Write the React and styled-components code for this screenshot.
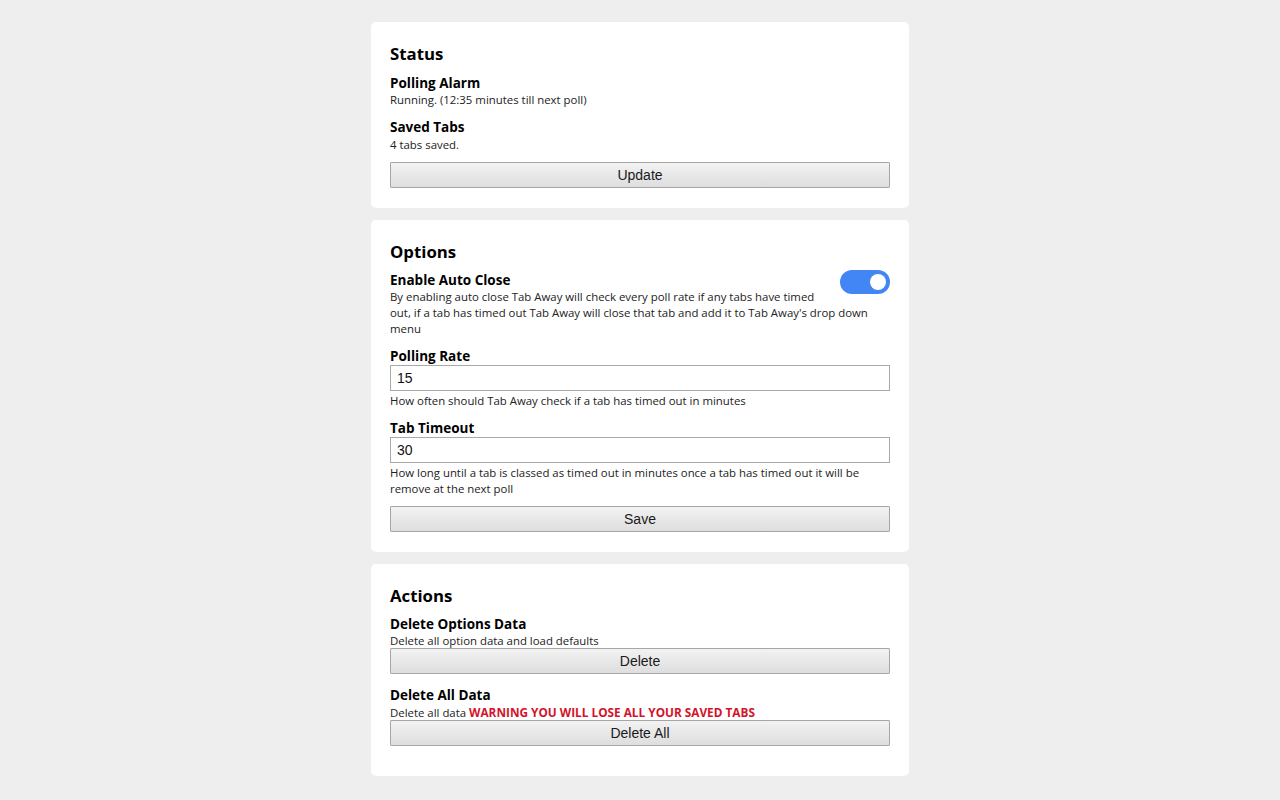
import React from 'react'
import styled, { createGlobalStyle } from 'styled-components'

const Global = createGlobalStyle`
  html, body {
    margin: 0;
    padding: 0;
    background: #eeeeee;
  }
  body {
    font-family: "Open Sans", "Noto Sans", sans-serif;
    color: #000;
  }
`

const Page = styled.div`
  display: flex;
  flex-direction: column;
  align-items: center;
  gap: 12px;
  padding: 22px 0 24px;
`

const Card = styled.section`
  width: 500px;
  background: #fff;
  border-radius: 5px;
  padding: 21px 19px ${p => p.$bottom || 20}px;
`

const Heading = styled.h2`
  margin: 0;
  font-size: 16.8px;
  line-height: 22px;
  font-weight: 700;
`

const Label = styled.div`
  font-size: 13.5px;
  line-height: 18px;
  font-weight: 700;
  margin-top: ${p => p.$gap ?? 10}px;
`

const Desc = styled.div`
  font-size: 11.4px;
  line-height: 16px;
  color: #222;
  margin-top: ${p => p.$before ?? 0}px;
`

const Warning = styled.span`
  color: #d4122a;
  font-weight: 700;
  font-size: 11.8px;
`

const Button = styled.button`
  display: block;
  width: 100%;
  height: 26px;
  margin-top: ${p => p.$gap ?? 9}px;
  border: 1px solid #a6a6a6;
  border-radius: 1px;
  background: linear-gradient(#f2f2f2, #dedede);
  font-family: "Liberation Sans", Arial, sans-serif;
  font-size: 14px;
  color: #1a1a1a;
  padding: 0;
`

const Input = styled.input`
  display: block;
  box-sizing: border-box;
  width: 100%;
  height: 26px;
  margin: 0;
  border: 1px solid #a9a9a9;
  padding: 0 6px;
  font-family: "Liberation Sans", Arial, sans-serif;
  font-size: 14px;
  color: #111;
  outline: none;
`

const ToggleBlock = styled.div`
  margin-top: 7px;
  padding-top: 1px;
  &::after {
    content: "";
    display: block;
    clear: both;
  }
`

const Switch = styled.div`
  float: right;
  margin: -1px 0 0 20px;
  width: 50px;
  height: 24px;
  border-radius: 12px;
  background: #4285f4;
  display: flex;
  align-items: center;
  justify-content: flex-end;
  padding-right: 4px;
  box-sizing: border-box;
`

const Knob = styled.div`
  width: 16px;
  height: 16px;
  border-radius: 50%;
  background: #fff;
`

export default function App() {
  return (
    <>
      <Global />
      <Page>
        <Card>
          <Heading>Status</Heading>
          <Label $gap={9}>Polling Alarm</Label>
          <Desc>Running. (12:35 minutes till next poll)</Desc>
          <Label>Saved Tabs</Label>
          <Desc $before={1}>4 tabs saved.</Desc>
          <Button>Update</Button>
        </Card>

        <Card>
          <Heading>Options</Heading>
          <ToggleBlock>
            <Switch><Knob /></Switch>
            <Label $gap={0}>Enable Auto Close</Label>
            <Desc>
              By enabling auto close Tab Away will check every poll rate if any tabs have timed out, if a tab has timed out Tab Away will close that tab and add it to Tab Away's drop down menu
            </Desc>
          </ToggleBlock>
          <Label>Polling Rate</Label>
          <Input defaultValue="15" />
          <Desc $before={2}>How often should Tab Away check if a tab has timed out in minutes</Desc>
          <Label>Tab Timeout</Label>
          <Input defaultValue="30" />
          <Desc $before={2}>How long until a tab is classed as timed out in minutes once a tab has timed out it will be remove at the next poll</Desc>
          <Button>Save</Button>
        </Card>

        <Card $bottom={30}>
          <Heading>Actions</Heading>
          <Label $gap={8}>Delete Options Data</Label>
          <Desc>Delete all option data and load defaults</Desc>
          <Button $gap={-1}>Delete</Button>
          <Label $gap={12}>Delete All Data</Label>
          <Desc>Delete all data <Warning>WARNING YOU WILL LOSE ALL YOUR SAVED TABS</Warning></Desc>
          <Button $gap={-1}>Delete All</Button>
        </Card>
      </Page>
    </>
  )
}
